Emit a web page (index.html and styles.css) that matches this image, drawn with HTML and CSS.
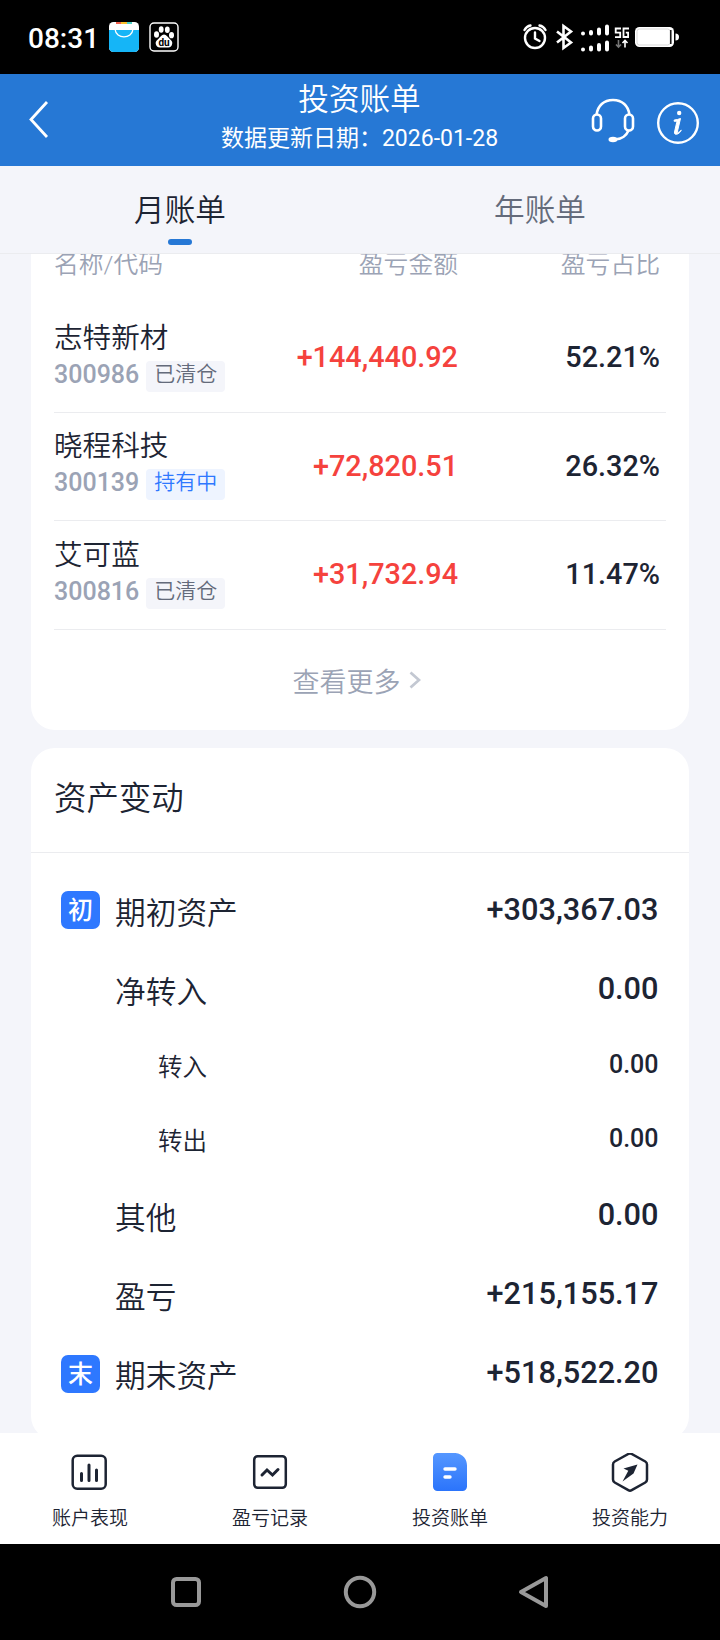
FILE: index.html
```html
<!DOCTYPE html>
<html lang="zh-CN">
<head>
    <meta charset="UTF-8">
    <title>投资账单</title>
    <link rel="stylesheet" href="styles.css">
</head>
<body>
    <!-- Status bar -->
    <div class="status">
        <span class="time">08:31</span>
        <svg class="app-store" width="30" height="30" viewBox="0 0 30 30">
            <rect width="30" height="30" rx="4.500" fill="#fff"/>
            <path d="M7 0h5v2H7z" fill="#f0604d"/>
            <path d="M12 0h6v2h-6z" fill="#fbc02d"/>
            <path d="M18 0h5v2h-5z" fill="#4dd0c8"/>
            <path d="M0 8h30v17.500a4.500 4.500 0 0 1-4.500 4.500h-21A4.500 4.500 0 0 1 0 25.500z" fill="#15b5f7"/>
            <path d="M6 7c1 10.500 17 10.500 18 0" fill="none" stroke="#fff" stroke-width="1.300"/>
        </svg>
        <svg class="baidu" width="30" height="30" viewBox="0 0 30 30">
            <rect x="1" y="1" width="28" height="28" rx="4" fill="none" stroke="#fff" stroke-width="1.400"/>
            <g fill="#fff">
                <ellipse cx="7.500" cy="12.500" rx="2.500" ry="3.200"/>
                <ellipse cx="12.200" cy="7.500" rx="2.400" ry="3.200"/>
                <ellipse cx="18.300" cy="7.800" rx="2.400" ry="3.200"/>
                <ellipse cx="22.500" cy="13.200" rx="2.500" ry="3.100"/>
                <path d="M15 12.500c2.500 0 3.500 2.500 5.500 4.200 3 2.500 3.300 4 2.300 6.500-1.200 2.800-4.800 2.300-7.800 2.300s-6.600.5-7.800-2.300c-1-2.500-.7-4 2.300-6.500 2-1.700 3-4.200 5.500-4.200z"/>
            </g>
            <text x="15" y="23.500" text-anchor="middle" class="du">du</text>
        </svg>
        <svg class="status-icons" width="160" height="34" viewBox="0 0 160 34">
            <g fill="none" stroke="#fff" stroke-width="2.400" stroke-linecap="round">
                <circle cx="15" cy="18" r="10"/>
                <path d="M15 12.500v6l4.500 2.500M4.500 10q2-3.800 6-4.500M25.500 10q-2-3.800-6-4.500"/>
            </g>
            <path d="M37 11.500l14 11-7.500 5.500v-22l7.500 5.500-14 11" fill="none" stroke="#fff" stroke-width="2.600"/>
            <g stroke="#fff" stroke-width="4" stroke-linecap="round">
                <path d="M63 13.500v0M71 12v1.500M79 9.500v4M87 6.500v7M63 29.500v0M71 27.500v2M79 25v4.500M87 22.500v7"/>
            </g>
            <g fill="none" stroke="#fff" stroke-width="1.800">
                <path d="M101 8.500h-5.300v4.200h4.500v4.500H95M109 8.500h-5.500v8.500h4.600v-4.300h-2.300"/>
                <path d="M105 27.500v-7M102.500 23l2.500-2.500 2.500 2.500" stroke-width="1.600"/>
                <path d="M98.500 20v7M96 24.500l2.500 2.500 2.500-2.500" stroke="#777" stroke-width="1.600"/>
            </g>
            <rect x="115" y="7" width="39" height="20" rx="4.500" fill="#fff"/>
            <rect x="117" y="9" width="33" height="16" rx="2.500" fill="none" stroke="#c8c8c8" stroke-width=".7"/>
            <path d="M150.800 10v14" stroke="#000" stroke-width="1.400"/>
            <path d="M155.500 13.500q3.500 0 3.500 3.500t-3.500 3.500z" fill="#fff"/>
        </svg>
    </div>

    <!-- Header -->
    <header class="header">
        <svg class="back" width="20" height="38" viewBox="0 0 20 38">
            <path d="M18 1L2 18.500l16 17.500" fill="none" stroke="#fff" stroke-width="2.800"/>
        </svg>
        <div class="heading">
            <h1>投资账单</h1>
            <p>数据更新日期：2026-01-28</p>
        </div>
        <div class="header-icons">
            <svg width="44" height="46" viewBox="0 0 44 46" fill="none" stroke="#fff" stroke-width="2.600">
                <path d="M5.500 17C6.500 7.500 13 2 22 2s15.500 5.500 16.500 15"/>
                <rect x="2" y="16.500" width="8" height="16" rx="4"/>
                <rect x="34" y="16.500" width="8" height="16" rx="4"/>
                <path d="M37.500 32.500C35.500 37.500 30.500 41 25 41.300"/>
                <ellipse cx="22" cy="41.500" rx="3.500" ry="1.700" fill="#fff" stroke-width="2"/>
            </svg>
            <svg class="info" width="44" height="44" viewBox="0 0 44 44">
                <circle cx="22" cy="22" r="19.800" fill="none" stroke="#fff" stroke-width="2.400"/>
                <circle cx="23.200" cy="12" r="2.200" fill="#fff"/>
                <path d="M18.200 19c2.300-.1 4-.7 6.300-1.500L21.300 31c-.2 1 .6 1.100 4-1.800-2 4.500-7.600 5.600-6.800 1.800l2.200-9.500c.2-1-.8-1.200-2.500-1.200z" fill="#fff" stroke="#fff"/>
            </svg>
        </div>
    </header>

    <!-- Tabs -->
    <nav class="tabs">
        <div class="tab active">月账单</div>
        <div class="tab">年账单</div>
    </nav>

    <main class="content">
        <section class="card stocks">
            <div class="stock-head">
                <span>名称/代码</span>
                <span>盈亏金额</span>
                <span>盈亏占比</span>
            </div>
            <div class="stock">
                <div class="info-col">
                    <div class="name">志特新材</div>
                    <div class="code">300986 <span class="tag">已清仓</span></div>
                </div>
                <div class="amount">+144,440.92</div>
                <div class="percent">52.21%</div>
            </div>
            <div class="stock">
                <div class="info-col">
                    <div class="name">晓程科技</div>
                    <div class="code">300139 <span class="tag holding">持有中</span></div>
                </div>
                <div class="amount">+72,820.51</div>
                <div class="percent">26.32%</div>
            </div>
            <div class="stock">
                <div class="info-col">
                    <div class="name">艾可蓝</div>
                    <div class="code">300816 <span class="tag">已清仓</span></div>
                </div>
                <div class="amount">+31,732.94</div>
                <div class="percent">11.47%</div>
            </div>
            <div class="more">
                查看更多
                <svg width="12" height="18" viewBox="0 0 12 18">
                    <path d="M1.500 1.500L10 9l-8.500 7.500" fill="none" stroke="#c3c8d2" stroke-width="2.800"/>
                </svg>
            </div>
        </section>

        <section class="card assets">
            <h2>资产变动</h2>
            <div class="asset-list">
                <div class="asset">
                    <span class="badge">初</span>
                    <span class="label">期初资产</span>
                    <span class="value">+303,367.03</span>
                </div>
                <div class="asset">
                    <span class="label">净转入</span>
                    <span class="value">0.00</span>
                </div>
                <div class="asset sub">
                    <span class="label">转入</span>
                    <span class="value">0.00</span>
                </div>
                <div class="asset sub">
                    <span class="label">转出</span>
                    <span class="value">0.00</span>
                </div>
                <div class="asset">
                    <span class="label">其他</span>
                    <span class="value">0.00</span>
                </div>
                <div class="asset">
                    <span class="label">盈亏</span>
                    <span class="value">+215,155.17</span>
                </div>
                <div class="asset">
                    <span class="badge">末</span>
                    <span class="label">期末资产</span>
                    <span class="value">+518,522.20</span>
                </div>
            </div>
        </section>
    </main>

    <!-- Bottom menu -->
    <nav class="menu">
        <div class="menu-item">
            <svg width="40" height="40" viewBox="0 0 40 40" fill="none" stroke="#1d2433" stroke-width="2.500" stroke-linecap="round">
                <rect x="2.700" y="2.700" width="33" height="33" rx="4.500"/>
                <path d="M11.500 20.500v7M19 12v15.500M26.500 17v10.500" stroke-width="3"/>
            </svg>
            <span>账户表现</span>
        </div>
        <div class="menu-item">
            <svg width="40" height="40" viewBox="0 0 40 40" fill="none" stroke="#1d2433" stroke-width="2.500">
                <rect x="4.200" y="3.200" width="31.600" height="31.600" rx="3.500"/>
                <path d="M12 22l5-5 5.500 5 5.500-5.500" stroke-width="3" stroke-linecap="round"/>
            </svg>
            <span>盈亏记录</span>
        </div>
        <div class="menu-item">
            <svg width="40" height="40" viewBox="0 0 40 40">
                <defs>
                    <linearGradient id="bill" x1="0" y1="0" x2="0" y2="1">
                        <stop offset="0" stop-color="#5597ff"/>
                        <stop offset="1" stop-color="#2b74fb"/>
                    </linearGradient>
                </defs>
                <path d="M7.500 0H25.500C33 1 37 6 37 12.500V33.500a4.500 4.500 0 0 1-4.500 4.500h-25A4.500 4.500 0 0 1 3 33.500V4.500A4.500 4.500 0 0 1 7.500 0z" fill="url(#bill)"/>
                <path d="M15 16h10M15 24h5" stroke="#fff" stroke-width="3.400" stroke-linecap="round"/>
            </svg>
            <span>投资账单</span>
        </div>
        <div class="menu-item">
            <svg width="40" height="40" viewBox="0 0 40 40">
                <path d="M18.300 1Q20 0 21.700 1L35.300 8.500Q37 9.500 37 11.500V26.500Q37 28.500 35.300 29.500L21.700 37.200Q20 38.200 18.300 37.200L4.700 29.500Q3 28.500 3 26.500V11.500Q3 9.500 4.700 8.500Z" fill="none" stroke="#1d2433" stroke-width="2.500"/>
                <path d="M27.500 11.500L13.500 15.500l4.800 2.200L12.500 28.500 23.500 20.500z" fill="#1d2433"/>
            </svg>
            <span>投资能力</span>
        </div>
    </nav>

    <!-- System navigation -->
    <div class="system-nav">
        <svg width="32" height="32" viewBox="0 0 32 32">
            <rect x="3" y="3" width="26" height="26" rx="3.500"/>
        </svg>
        <svg width="34" height="34" viewBox="0 0 34 34">
            <circle cx="17" cy="17" r="14.200"/>
        </svg>
        <svg width="32" height="34" viewBox="0 0 32 34">
            <path d="M28 3v28L3 17z" stroke-linejoin="round"/>
        </svg>
    </div>
</body>
</html>
```
FILE: styles.css
```css
* {
    box-sizing: border-box;
}

body {
    width: 720px;
    height: 1640px;
    margin: 0;
    display: flex;
    flex-direction: column;
    overflow: hidden;
    background-color: #f4f5fa;
    color: #1d2433;
    font-family: Roboto, "Noto Sans CJK SC", sans-serif;
    font-weight: 350;
}

h1, h2, p {
    margin: 0;
    font-weight: 350;
}

svg {
    display: block;
    flex-shrink: 0;
}

/* Status bar */
.status {
    height: 74px;
    flex-shrink: 0;
    display: flex;
    align-items: center;
    padding-left: 28px;
    background-color: #000;
    color: #fff;
}

.time {
    width: 81px;
    font-size: 28px;
    font-weight: 500;
    line-height: 34px;
    padding-top: 3px;
}

.baidu {
    margin-left: 10px;
}

.du {
    font-size: 10px;
    font-weight: 700;
}

.status-icons {
    margin-left: 341px;
}

/* Header */
.header {
    height: 92px;
    flex-shrink: 0;
    display: flex;
    align-items: center;
    justify-content: space-between;
    padding: 0 20px 0 29px;
    background-color: #2678d5;
    color: #fff;
}

.back {
    margin-right: 79px;
}

.heading {
    text-align: center;
}

.heading h1 {
    font-size: 30.600px;
    line-height: 40px;
}

.heading p {
    font-size: 23px;
    font-weight: 400;
    line-height: 38px;
    margin-bottom: 3px;
}

.header-icons {
    display: flex;
    gap: 21px;
    padding-top: 3px;
}

.info {
    margin-top: 3px;
}

/* Tabs */
.tabs {
    height: 88px;
    flex-shrink: 0;
    display: flex;
    border-bottom: 1px solid #ebecef;
}

.tab {
    flex: 1;
    display: flex;
    flex-direction: column;
    align-items: center;
    padding-top: 24px;
    font-size: 30.600px;
    line-height: 42px;
    color: #646b7b;
}

.tab.active {
    color: #1d2433;
}

.tab.active::after {
    content: "";
    width: 24px;
    height: 6px;
    margin-top: 7px;
    border-radius: 3px;
    background-color: #2678d5;
}

/* Cards */
.content {
    height: 1179px;
    flex-shrink: 0;
    padding: 0 31px;
    overflow: hidden;
}

.card {
    background-color: #fff;
    border-radius: 24px;
}

.stocks {
    height: 476px;
    padding: 0 23px;
    border-radius: 0 0 24px 24px;
}

.stock-head, .stock {
    display: grid;
    grid-template-columns: 200px 204px 1fr;
}

.stock-head {
    height: 50px;
    font-size: 24.800px;
    line-height: 21px;
    color: #9ba3b5;
}

.stock-head span + span {
    text-align: right;
}

.stock-head span:last-child {
    padding-right: 6px;
}

.stock {
    height: 108.500px;
    align-items: center;
    padding-bottom: 1px;
    border-bottom: 1px solid #ebecef;
    font-size: 28.800px;
    font-weight: 500;
    text-align: right;
}

.info-col {
    text-align: left;
    margin-top: -3px;
}

.name {
    font-size: 28.600px;
    font-weight: 350;
    line-height: 36px;
    margin-bottom: 5px;
}

.code {
    display: flex;
    gap: 7px;
    font-size: 25px;
    line-height: 27px;
    color: #9ba3b5;
}

.tag {
    height: 31px;
    padding: 0 8px;
    border-radius: 4px;
    background-color: #f4f5fa;
    color: #646b7b;
    font-size: 21px;
    font-weight: 350;
    line-height: 27px;
}

.tag.holding {
    background-color: #eef4ff;
    color: #2e78ff;
}

.amount {
    color: #f5423d;
}

.percent {
    padding-right: 6px;
}

.more {
    display: flex;
    align-items: center;
    justify-content: center;
    gap: 8px;
    padding-right: 7px;
    height: 101px;
    font-size: 27px;
    color: #9ba3b5;
}

.assets {
    height: 692px;
    margin-top: 18px;
}

.assets h2 {
    height: 105px;
    padding-left: 23px;
    border-bottom: 1px solid #ebecef;
    font-size: 32.400px;
    line-height: 102px;
}

.asset-list {
    padding: 16.500px 30.500px 0 30px;
}

.asset {
    height: 79.300px;
    display: grid;
    grid-template-columns: 54px 1fr auto;
    align-items: center;
    font-size: 30.700px;
}

.badge {
    width: 39px;
    height: 38px;
    margin-top: 2px;
    border-radius: 7px;
    background-color: #2e78ff;
    color: #fff;
    font-size: 25px;
    font-weight: 500;
    line-height: 39px;
    text-align: center;
}

.label {
    grid-column: 2;
    padding-top: 2px;
}

.value {
    font-weight: 500;
}

.sub {
    height: 73.300px;
    font-size: 24.500px;
}

.sub .label {
    padding-left: 43px;
}

.sub .value {
    font-size: 25px;
}

/* Bottom menu */
.menu {
    height: 111px;
    flex-shrink: 0;
    display: flex;
    background-color: #fff;
}

.menu-item {
    flex: 1;
    display: flex;
    flex-direction: column;
    align-items: center;
    gap: 12px;
    padding-top: 20px;
    font-size: 19px;
    line-height: 28px;
}

/* System navigation */
.system-nav {
    height: 96px;
    flex-shrink: 0;
    display: flex;
    align-items: center;
    justify-content: center;
    gap: 141px;
    background-color: #000;
}

.system-nav svg {
    fill: none;
    stroke: #999;
    stroke-width: 4;
}
```
